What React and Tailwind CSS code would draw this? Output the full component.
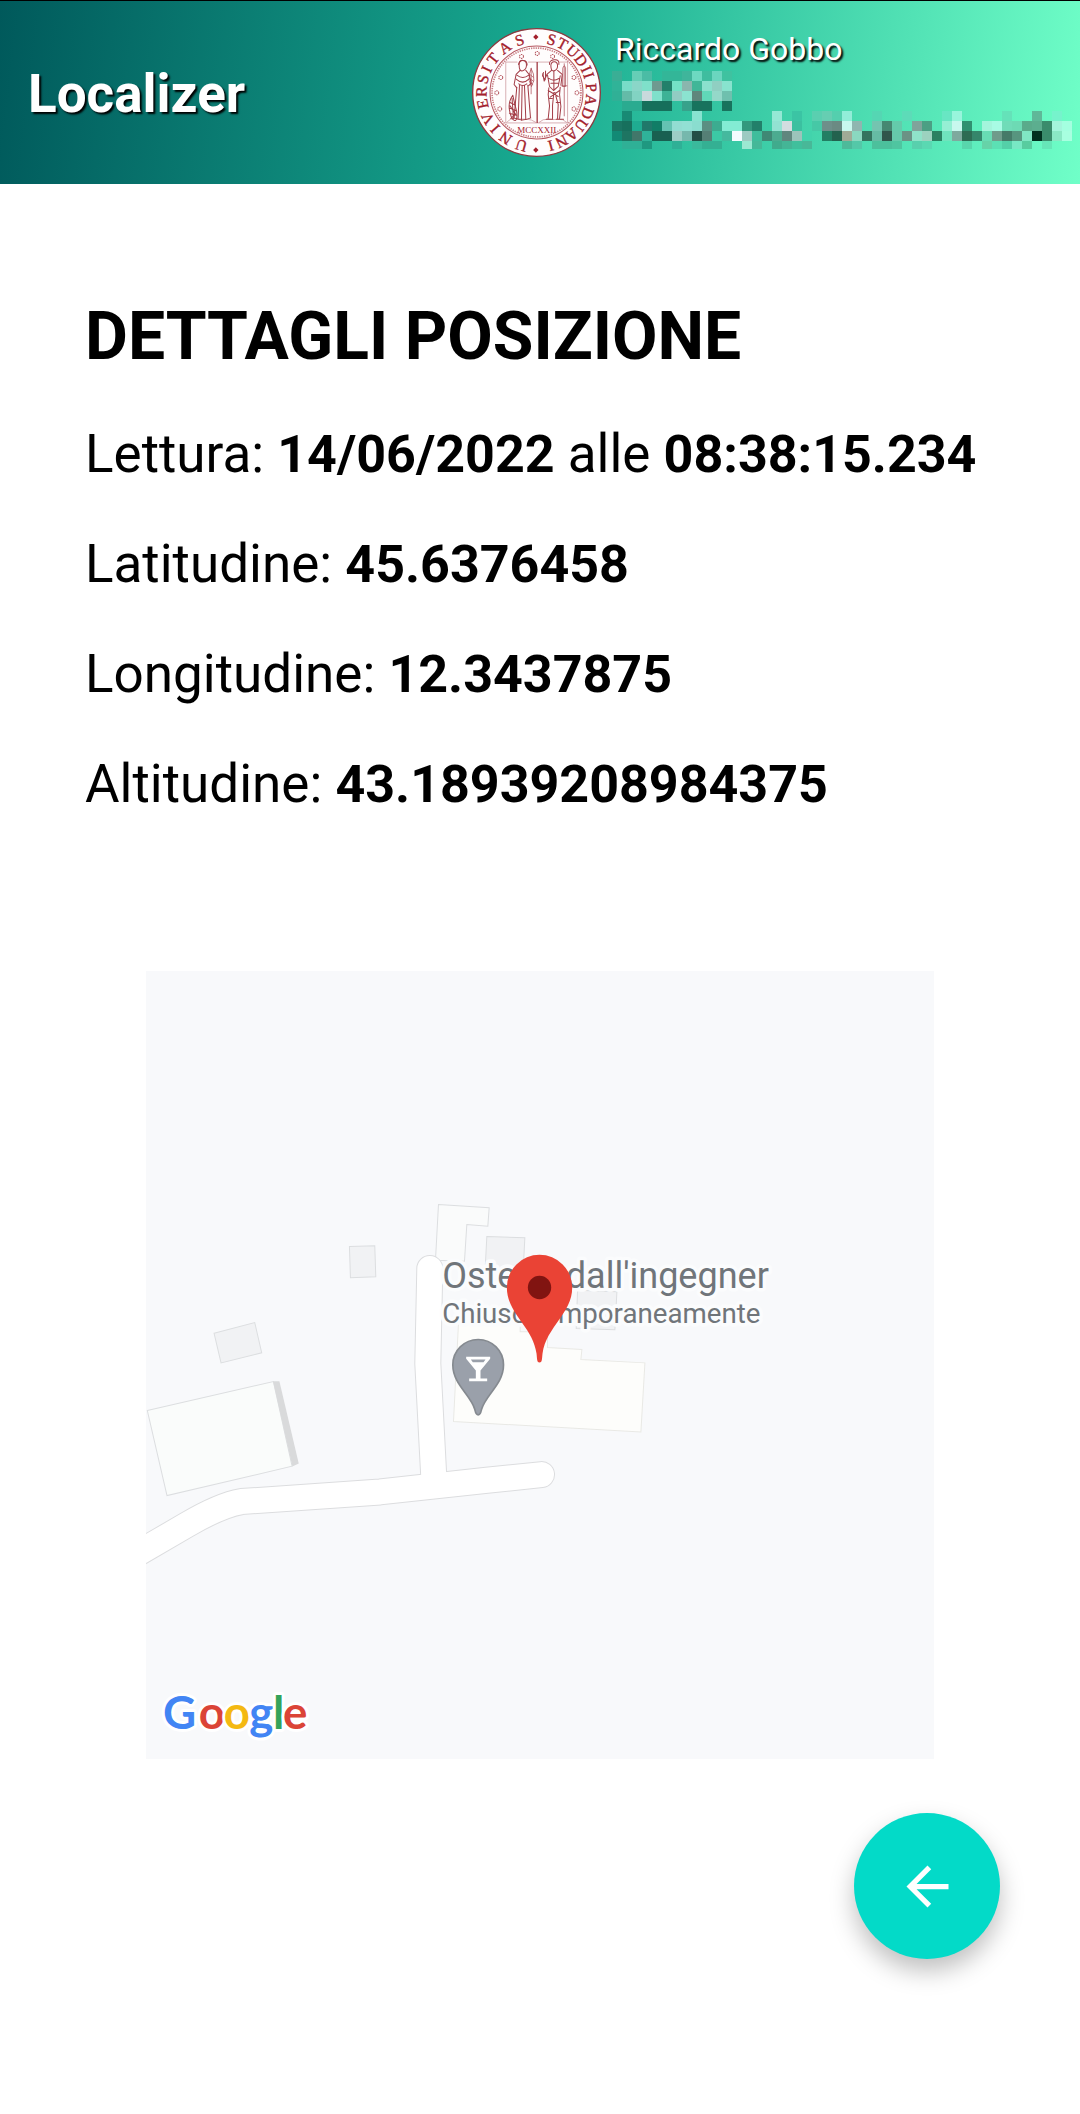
import React from "react";

const SHADOW = "[text-shadow:2px_2px_2px_#000]";

const LEFT_LEGEND = [
  ["U", 196], ["N", 214], ["I", 229], ["V", 242], ["E", 258], ["R", 271],
  ["S", 284], ["I", 295], ["T", 308], ["A", 325], ["S", 342],
];
const RIGHT_LEGEND = [
  ["S", 16], ["T", 28], ["U", 41], ["D", 54], ["I", 65], ["I", 72],
  ["P", 85], ["A", 98], ["D", 112], ["U", 126], ["A", 140], ["N", 153], ["I", 165],
];
const STARS = [
  [231, 115], [184, 124], [277, 124], [122, 187], [341, 187],
  [110, 233], [350, 233], [119, 281], [341, 281],
];

function Emblem() {
  return (
    <svg viewBox="36 39 386 386" className="size-[129px] shrink-0" role="img" aria-label="Universitas Studii Paduani">
      <circle cx="229" cy="232" r="191" fill="#fffdfd" stroke="#8c3a40" strokeWidth="4" />
      <circle cx="229" cy="232" r="139" fill="none" stroke="#b5565f" strokeWidth="3" />
      <circle cx="229" cy="232" r="133" fill="none" stroke="#c98087" strokeWidth="5" strokeDasharray="4 3" />
      <g fill="#a3202c" fontFamily="'Liberation Serif', serif" fontSize="47" textAnchor="middle">
        {[...LEFT_LEGEND, ...RIGHT_LEGEND].map(([letter, angle]) => (
          <text key={angle} x="229" y="83" transform={`rotate(${angle} 229 232)`} stroke="#a3202c" strokeWidth="1">
            {letter}
          </text>
        ))}
        <text x="230" y="353" fontSize="27">MCCXXII</text>
      </g>
      <g fill="#a3202c">
        <path d="M227 58l8 8-8 8-8-8zM227 396l8 8-8 8-8-8z" />
      </g>
      <g fill="none" stroke="#b5565f" strokeWidth="3">
        {STARS.map(([x, y]) => (
          <circle key={`${x}-${y}`} cx={x} cy={y} r="6" strokeDasharray="4 2" />
        ))}
      </g>
      <g fill="none" stroke="#c58a90" strokeWidth="2">
        <path d="M172 141H137V323H322V141H298M204 141H267" />
        <path d="M231 141V323" stroke="#a33c46" strokeWidth="4" />
        <path d="M140 322q10-14 28-12t32 2 28 10M236 322q12-12 28-10t30 0 26 10" />
      </g>
      <g fill="none" stroke="#a33c46" strokeWidth="3" strokeLinecap="round" strokeLinejoin="round">
        <path d="M177 150q0-14 11-14t11 14-11 17-11-17z" />
        <path d="M175 148q4-14 14-12 12 0 12 14M180 166l-12 12-6 30 8 10M197 166l10 12 6 26-8 8" />
        <path d="M170 180q18 14 36 0M168 192q20 18 38 0M176 206q12 10 24 0" />
        <path d="M170 216l-8 92M178 210l-4 100M186 212l-2 104M193 210l4 102M203 210l8 98M162 308q24 12 50 0" />
        <path d="M213 160q-8 16-6 36l7 18 7-18q2-20-8-36zM209 178l10 8M208 190l12 8M210 202l8 6M213 164v72" strokeWidth="2" />
        <path d="M158 240q-14 20-10 44t12 30 10-6-2-26-10-42zM150 262l16 8M147 278l20 8M148 294l20 6M156 250l4 60M152 310l14-14M150 272l18 28" />
        <path d="M272 152q0-12 10-12t10 12-10 15-10-15zM268 148q-2-12 14-14t14 14" />
        <path d="M274 166l-14 12-8 20-4-22M292 166l14 12-4 32M262 180l6 34 12 12 14-12 6-32M266 190q14 10 30 0M272 204h22M281 168v54" />
        <path d="M266 218l-2 20 4 34-4 38M281 232l-4 38 0 40M284 232l10 36-2 42M300 216l-2 22 4 36-4 36M264 226l30 18M298 226l-28 20M268 250h8M288 262h10" />
        <path d="M308 158q4-12 8 0v56h-8zM312 146v156M304 212h16" strokeWidth="2" />
        <path d="M250 172l-3 10 8 12M256 168v18M258 312h20M288 312h22" />
      </g>
    </svg>
  );
}

// Rows of the pixelated block: [column, colour] pairs.
const MOSAIC = [
  [[0, "#3aae95"], [2, "#66ceb6"], [3, "#4bbca5"], [5, "#33b698"], [6, "#33b698"], [7, "#3fb59b"], [8, "#6dd9c1"], [9, "#3fbd9f"], [10, "#6bd6bf"], [11, "#3fc2a0"]],
  [[0, "#30b398"], [1, "#78dcc8"], [2, "#8ad6c8"], [3, "#7fe0ca"], [4, "#6f9a90"], [5, "#22806a"], [6, "#74e2c6"], [7, "#8ab6ae"], [8, "#40b698"], [9, "#8be0cd"], [10, "#90cfc2"], [11, "#88e3ce"]],
  [[0, "#30b096"], [1, "#64bba8"], [2, "#82d3c3"], [3, "#c9d9dc"], [4, "#7fe0cb"], [5, "#3db296"], [6, "#92ccc3"], [7, "#8be3d0"], [8, "#5f867c"], [9, "#60d8b8"], [10, "#94d8c9"], [11, "#6fc0ae"]],
  [[1, "#2aab90"], [2, "#2aab90"], [3, "#166f5b"], [4, "#166f5b"], [5, "#166f5b"], [7, "#37a28b"], [8, "#18735d"], [9, "#18735d"], [11, "#18735d"]],
  [[1, "#188a74"], [8, "#88e3d0"], [16, "#95e8d5"], [18, "#3bc4a4"], [20, "#5acfb0"], [21, "#66ceb2"], [22, "#54cfae"], [23, "#92edd8"], [26, "#55d6b3"], [29, "#5ddbb8"], [33, "#68e6c3"], [34, "#98f5dc"], [39, "#65e2b9"], [42, "#5fb898"], [44, "#76f3cc"]],
  [[0, "#1b7563"], [1, "#17705d"], [2, "#1fac91"], [3, "#20796a"], [4, "#117d66"], [5, "#64c3b2"], [6, "#92ddd2"], [7, "#92e0d4"], [8, "#8addcf"], [9, "#5b8f83"], [10, "#3cac90"], [11, "#83ecd4"], [12, "#83ecd4"], [13, "#33987e"], [14, "#22806a"], [16, "#92e2d2"], [17, "#d3dde0"], [18, "#3cc0a0"], [20, "#46c8a6"], [21, "#6e8f8a"], [22, "#6b8a83"], [23, "#c8f8ee"], [24, "#8fb6b0"], [26, "#74c4b0"], [27, "#468872"], [28, "#64cbab"], [30, "#80a49b"], [31, "#4c9f84"], [33, "#95efd4"], [34, "#c8f8ee"], [35, "#309070"], [37, "#a4f5dc"], [38, "#a8fbe4"], [39, "#70dcb8"], [40, "#6ddab4"], [41, "#5aab8b"], [42, "#5cae8f"], [43, "#3a8c6c"], [44, "#a4f5dc"], [45, "#a4ffe0"]],
  [[0, "#128a75"], [1, "#1e7562"], [2, "#41776a"], [3, "#2fb299"], [4, "#196051"], [5, "#196051"], [6, "#9ccdc5"], [7, "#76b8ad"], [8, "#234f45"], [9, "#557f75"], [10, "#3cc9a5"], [11, "#45b99e"], [12, "#f4fbff"], [13, "#9dcac2"], [14, "#3fbd9c"], [15, "#3f8875"], [16, "#4cab90"], [17, "#60867e"], [18, "#9cc4bb"], [19, "#42d3ac"], [21, "#227f63"], [22, "#23624e"], [23, "#a0aa96"], [24, "#8ad8c0"], [25, "#34735e"], [26, "#66bba4"], [27, "#30564b"], [28, "#66c9ab"], [29, "#6b9285"], [30, "#8fe3c9"], [31, "#9cd2bf"], [32, "#2b8061"], [33, "#70e3bd"], [34, "#7eaa9e"], [35, "#2d6b53"], [36, "#35866b"], [37, "#68dcb4"], [38, "#6f9c8b"], [39, "#457a68"], [40, "#57957f"], [41, "#80e6c4"], [42, "#01301f"], [43, "#3a8c6c"], [44, "#8ae8c5"], [45, "#a8ffe0"]],
  [[1, "#2fb096"], [2, "#2fb096"], [3, "#1f9880"], [6, "#2fb096"], [8, "#3aba9c"], [9, "#34b093"], [10, "#34b093"], [13, "#9be8d2"], [14, "#45b898"], [16, "#40ab8d"], [17, "#44b596"], [18, "#40bf9c"], [19, "#48b898"], [23, "#4dba9a"], [24, "#54c8a8"], [26, "#4cc09c"], [27, "#4cc09c"], [28, "#4fc5a0"], [30, "#58d0ad"], [31, "#5ad8b2"], [35, "#58d6ac"], [37, "#66d3a8"], [38, "#5ce0b4"], [39, "#54d0a8"], [40, "#78e8c4"], [41, "#58cc9f"], [43, "#66e6b8"]],
];

function Mosaic() {
  return (
    <svg viewBox="0 0 460 78" className="h-[78px] w-[460px]" shapeRendering="crispEdges" aria-hidden="true">
      {MOSAIC.map((row, r) =>
        row.map(([c, fill]) => <rect key={`${r}-${c}`} x={c * 10} y={r * 10} width="10" height="10" fill={fill} />)
      )}
    </svg>
  );
}

function Header() {
  return (
    <header className="flex h-[184px] items-center border-t border-black bg-[linear-gradient(97deg,#00595b_0%,#18aa90_50%,#70ffc8_100%)] pl-7 text-white">
      <h1 className={`flex-1 pt-1 text-[53px] leading-none font-bold ${SHADOW}`}>Localizer</h1>
      <Emblem />
      <div className="ml-[11px] w-[468px] shrink-0 self-start pt-7">
        <p className={`mb-[2px] pl-[3px] text-[32px] leading-10 ${SHADOW}`}>Riccardo Gobbo</p>
        <Mosaic />
      </div>
    </header>
  );
}

function StaticMap() {
  return (
    <svg viewBox="18 -627 2364 2364" className="block aspect-square w-[73%] bg-[#f8f9fb]" fontFamily="Roboto, sans-serif" role="img" aria-label="Mappa della posizione">
      <g stroke="#dcdee0" strokeWidth="3">
        <g fill="#f1f2f4">
          <path d="M628 199L704 197 707 290 631 293z" />
          <path d="M222 459L344 427 365 518 243 548z" />
          <path d="M1040 169L1154 173 1149 270 1035 265z" />
          <path d="M1312 330L1430 335 1424 449 1308 445z" />
        </g>
        <path d="M895 73L1047 83 1043 138 980 133 973 243 886 240z" fill="#fafbfb" />
        <path d="M22 691L400 604 456 858 81 946z" fill="#fafcfb" />
        <path d="M956 410L1140 420 1140 455 1222 455 1222 502 1325 508 1322 538 1514 548 1502 755 940 724z" fill="#fdfdfb" stroke="#e9e9e5" />
      </g>
      <path d="M399 603H418L476 850 457 859z" fill="#d9dadb" />
      <g fill="none" strokeLinecap="round" strokeLinejoin="round">
        <g stroke="#dcdddf" strokeWidth="81">
          <path d="M-60 1150L140 1034Q240 975 304 964L720 935 1040 900 1204 883" />
          <path d="M869 265L863 550 882 910" />
        </g>
        <g stroke="#fff" strokeWidth="75">
          <path d="M-60 1150L140 1034Q240 975 304 964L720 935 1040 900 1204 883" />
          <path d="M869 265L863 550 882 910" />
        </g>
      </g>
      <g fill="#70757a" stroke="#fbfcfd" strokeWidth="22" strokeLinejoin="round" paintOrder="stroke">
        <text x="906" y="325" fontSize="108">Osteria dall'ingegner</text>
        <text x="906" y="430" fontSize="83">Chiuso temporaneamente</text>
      </g>
      <path d="M1014 704C1007 704 1006 697 1004 688C992 644 938 613 938 554A76 76 0 0 1 1090 554C1090 613 1036 644 1024 688C1022 697 1021 704 1014 704Z" fill="#9aa0aa" stroke="#858a90" strokeWidth="5" />
      <path d="M978 530H1050V536L1021 571V595H1041V603H987V595H1007V571L978 536ZM992 538L998 546H1030L1036 538Z" fill="#fff" fillRule="evenodd" />
      <path d="M1198 547C1190 547 1191 538 1189 520C1178 440 1100 400 1100 322A98 98 0 0 1 1296 322C1296 400 1218 440 1207 520C1205 538 1206 547 1198 547Z" fill="#ea4335" />
      <circle cx="1198" cy="322" r="35" fill="#811411" />
      <g fontFamily="Lato, sans-serif" fontSize="137" fontWeight="700" stroke="#fff" strokeWidth="18" strokeLinejoin="round" paintOrder="stroke">
        <text y="1645">
          <tspan x="69" fill="#4285f4">G</tspan>
          <tspan x="176" fill="#db4437">o</tspan>
          <tspan x="251" fill="#f4b912">o</tspan>
          <tspan x="328" fill="#4285f4">g</tspan>
          <tspan x="399" fill="#34a35a">l</tspan>
          <tspan x="429" fill="#db4437">e</tspan>
        </text>
      </g>
    </svg>
  );
}

const READINGS = [
  ["Latitudine", "45.6376458"],
  ["Longitudine", "12.3437875"],
  ["Altitudine", "43.18939208984375"],
];

function Value({ children }) {
  return <b className="text-[52px] leading-none">{children}</b>;
}

export default function App() {
  return (
    <div className="min-h-screen bg-white font-[Roboto,sans-serif] text-black">
      <Header />
      <main>
        <section className="px-[85px] pt-[113px]">
          <h2 className="mb-[22px] text-[66px] leading-[80px] font-bold">DETTAGLI POSIZIONE</h2>
          <div className="text-[53px] leading-[110px]">
            <p>
              Lettura: <Value>14/06/2022</Value> alle <Value>08:38:15.234</Value>
            </p>
            {READINGS.map(([label, value]) => (
              <p key={label}>
                {label}: <Value>{value}</Value>
              </p>
            ))}
          </div>
        </section>
        <div className="mt-[132px] flex justify-center">
          <StaticMap />
        </div>
        <div className="mt-[54px] flex justify-end pr-[80px]">
          <button
            type="button"
            aria-label="Indietro"
            className="flex size-[146px] items-center justify-center rounded-full bg-[#03dac8] text-white shadow-[0_12px_24px_rgba(0,0,0,0.25)]"
          >
            <svg viewBox="0 0 24 24" className="size-[63px]" fill="currentColor" aria-hidden="true">
              <path d="M20 11H7.83l5.59-5.59L12 4l-8 8 8 8 1.41-1.41L7.83 13H20v-2z" />
            </svg>
          </button>
        </div>
      </main>
    </div>
  );
}
